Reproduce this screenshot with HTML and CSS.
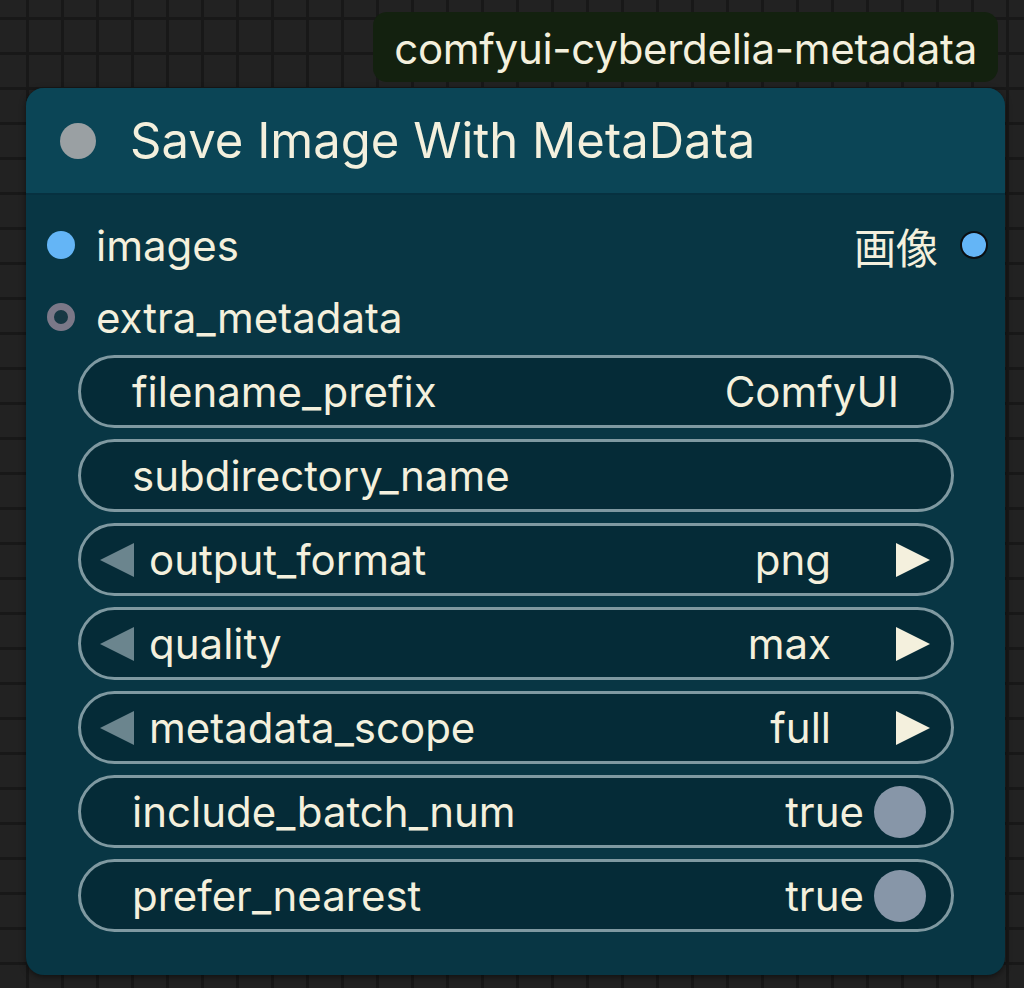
FILE: index.html
```html
<!DOCTYPE html>
<html>
<head>
    <title>Save Image With MetaData</title>
    <link rel="stylesheet" href="styles.css">
</head>
<body>
    <div class="canvas">
        <div class="badge">comfyui-cyberdelia-metadata</div>
        <div class="node">
            <div class="node-title">
                <span class="title-dot"></span>
                <span class="title-text">Save Image With MetaData</span>
            </div>
            <div class="node-body">
                <div class="slot-row">
                    <div class="slot">
                        <span class="dot dot-image"></span>
                        <span>images</span>
                    </div>
                    <div class="slot slot-out">
                        <span>画像</span>
                        <span class="dot dot-image dot-out"></span>
                    </div>
                </div>
                <div class="slot-row">
                    <div class="slot">
                        <span class="dot dot-ring"></span>
                        <span>extra_metadata</span>
                    </div>
                </div>

                <div class="widget">
                    <span class="w-label">filename_prefix</span>
                    <span class="w-value">ComfyUI</span>
                </div>
                <div class="widget">
                    <span class="w-label">subdirectory_name</span>
                </div>
                <div class="widget combo">
                    <svg class="arrow arrow-left" viewBox="0 0 34 34"><polygon points="34,0 34,34 0,17"/></svg>
                    <span class="w-label">output_format</span>
                    <span class="w-value">png</span>
                    <svg class="arrow arrow-right" viewBox="0 0 34 34"><polygon points="0,0 0,34 34,17"/></svg>
                </div>
                <div class="widget combo">
                    <svg class="arrow arrow-left" viewBox="0 0 34 34"><polygon points="34,0 34,34 0,17"/></svg>
                    <span class="w-label">quality</span>
                    <span class="w-value">max</span>
                    <svg class="arrow arrow-right" viewBox="0 0 34 34"><polygon points="0,0 0,34 34,17"/></svg>
                </div>
                <div class="widget combo">
                    <svg class="arrow arrow-left" viewBox="0 0 34 34"><polygon points="34,0 34,34 0,17"/></svg>
                    <span class="w-label">metadata_scope</span>
                    <span class="w-value">full</span>
                    <svg class="arrow arrow-right" viewBox="0 0 34 34"><polygon points="0,0 0,34 34,17"/></svg>
                </div>
                <div class="widget toggle">
                    <span class="w-label">include_batch_num</span>
                    <span class="w-value">true</span>
                    <span class="knob"></span>
                </div>
                <div class="widget toggle">
                    <span class="w-label">prefer_nearest</span>
                    <span class="w-value">true</span>
                    <span class="knob"></span>
                </div>
            </div>
        </div>
    </div>
</body>
</html>
```

FILE: styles.css
```css
body{
    margin: 0;
    height: 988px;
    background-color: #222222;
    background-image:
        linear-gradient(to right, #181818 3px, transparent 3px),
        linear-gradient(to bottom, #181818 3px, transparent 3px);
    background-size: 35px 35px;
    background-position: 26px 17px;
    font-family: Inter, "Noto Sans CJK JP", sans-serif;
    color: #f4f0dd;
    overflow: hidden;
}
.canvas{
    width: 979px;
    padding: 12px 0 0 26px;
    display: flex;
    flex-direction: column;
}
.badge{
    align-self: flex-end;
    margin-right: 7px;
    height: 70px;
    padding: 4px 21px 0 21px;
    box-sizing: border-box;
    background: #13210f;
    border-radius: 14px;
    font-size: 42px;
    line-height: 66px;
    letter-spacing: -0.3px;
}
.node{
    margin-top: 6px;
    height: 887px;
    background: #083644;
    border-radius: 18px;
    overflow: hidden;
    box-shadow: 0 2px 6px rgba(0,0,0,0.5);
}
.node-title{
    height: 105px;
    background: #0b4556;
    border-bottom: 2px solid #073140;
    display: flex;
    align-items: center;
}
.title-dot{
    width: 36px;
    height: 36px;
    border-radius: 50%;
    background: #9aa0a3;
    margin-left: 34px;
}
.title-text{
    margin-left: 34px;
    font-size: 49px;
}
.node-body{
    padding: 14px 0 0 0;
}
.slot-row{
    height: 72px;
    display: flex;
    align-items: center;
    justify-content: space-between;
    font-size: 42px;
}
.slot{
    display: flex;
    align-items: center;
}
.dot{
    width: 28px;
    height: 28px;
    border-radius: 50%;
    box-sizing: border-box;
    margin-left: 21px;
    margin-right: 21px;
}
.dot-image{
    background: #64b5f6;
}
.dot-out{
    border: 2px solid #0a0f12;
    margin-left: 22px;
    margin-right: 17px;
}
.dot-ring{
    border: 7px solid #7b7888;
    background: #173844;
}
.widget{
    height: 73px;
    margin: 2px 51px 11px 52px;
    box-sizing: border-box;
    border: 3px solid #7f99a1;
    border-radius: 37px;
    background: #052b37;
    display: flex;
    align-items: center;
    padding: 0 52px 0 51px;
    font-size: 42px;
}
.widget + .widget{
    margin-top: 0;
}
.w-label{
    flex: 1;
}
.combo{
    padding: 0 21px 0 19px;
}
.combo .w-label{
    margin-left: 15px;
}
.combo .w-value{
    margin-right: 65px;
}
.arrow{
    width: 34px;
    height: 34px;
}
.arrow-left{
    fill: #6b858e;
}
.arrow-right{
    fill: #f4f0dd;
}
.toggle{
    padding-right: 25px;
}
.knob{
    width: 52px;
    height: 52px;
    border-radius: 50%;
    background: #8796a8;
    margin-left: 10px;
}
```
